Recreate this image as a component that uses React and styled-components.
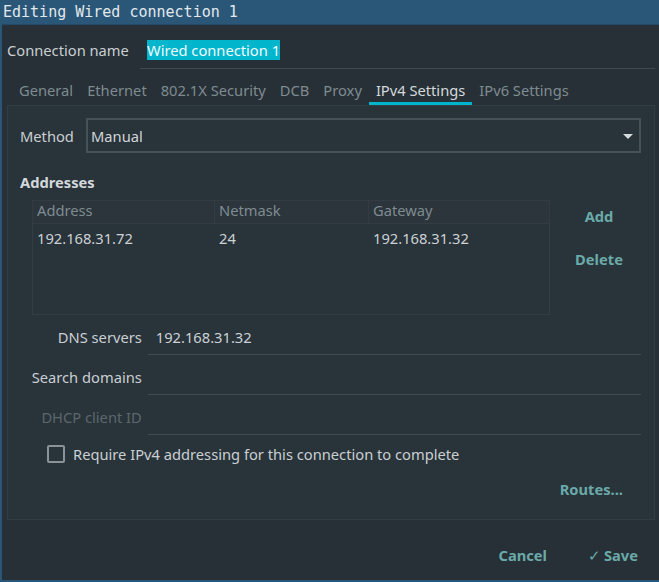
import React from "react";
import styled, { createGlobalStyle } from "styled-components";

const GlobalStyle = createGlobalStyle`
  html, body {
    margin: 0;
    padding: 0;
    background: #273036;
  }
  body {
    font-family: "Noto Sans", "Open Sans", sans-serif;
    font-size: 14.7px;
    color: #c9cfd2;
  }
`;

const tabs = [
  "General",
  "Ethernet",
  "802.1X Security",
  "DCB",
  "Proxy",
  "IPv4 Settings",
  "IPv6 Settings",
];

const App = () => {
  return (
    <>
      <GlobalStyle />
      <Window>
        <TitleBar>Editing Wired connection 1</TitleBar>
        <Body>
          <NameRow>
            <NameLabel>Connection name</NameLabel>
            <NameField>
              <Selected>Wired connection 1</Selected>
            </NameField>
          </NameRow>

          <TabBar>
            {tabs.map((t) => (
              <Tab key={t} $active={t === "IPv4 Settings"}>
                {t}
              </Tab>
            ))}
          </TabBar>

          <Panel>
            <MethodRow>
              <MethodLabel>Method</MethodLabel>
              <Combo>
                Manual
                <Arrow />
              </Combo>
            </MethodRow>

            <SectionTitle>Addresses</SectionTitle>

            <AddressArea>
              <Table>
                <HeaderRow>
                  <HeadCell $w={182}>Address</HeadCell>
                  <HeadCell $w={154}>Netmask</HeadCell>
                  <HeadCell>Gateway</HeadCell>
                </HeaderRow>
                <DataRow>
                  <Cell $w={182}>192.168.31.72</Cell>
                  <Cell $w={154}>24</Cell>
                  <Cell>192.168.31.32</Cell>
                </DataRow>
              </Table>
              <SideButtons>
                <FlatButton>Add</FlatButton>
                <FlatButton>Delete</FlatButton>
              </SideButtons>
            </AddressArea>

            <FieldRow>
              <FieldLabel>DNS servers</FieldLabel>
              <FieldInput>192.168.31.32</FieldInput>
            </FieldRow>
            <FieldRow>
              <FieldLabel>Search domains</FieldLabel>
              <FieldInput />
            </FieldRow>
            <FieldRow>
              <FieldLabel $disabled>DHCP client ID</FieldLabel>
              <FieldInput />
            </FieldRow>

            <CheckRow>
              <Checkbox />
              Require IPv4 addressing for this connection to complete
            </CheckRow>

            <RoutesRow>
              <FlatButton>Routes...</FlatButton>
            </RoutesRow>
          </Panel>

          <Footer>
            <FlatButton>Cancel</FlatButton>
            <FlatButton>
              <Check>✓</Check>Save
            </FlatButton>
          </Footer>
        </Body>
      </Window>
    </>
  );
};

const Window = styled.div`
  width: 659px;
  height: 582px;
  box-sizing: border-box;
  border-left: 2px solid #2a5778;
  border-bottom: 2px solid #2a5778;
  display: flex;
  flex-direction: column;
  overflow: hidden;
`;

const TitleBar = styled.div`
  height: 25px;
  flex: none;
  box-sizing: border-box;
  background: #2a5778;
  border-bottom: 1px solid #224a66;
  margin-left: -2px;
  padding-left: 3px;
  font-family: "DejaVu Sans Mono", monospace;
  font-size: 15px;
  line-height: 25px;
  color: #e2e8ec;
  white-space: nowrap;
`;

const Body = styled.div`
  flex: 1;
  display: flex;
  flex-direction: column;
  padding: 0 4px 0 5px;
`;

const NameRow = styled.div`
  height: 44px;
  flex: none;
  display: flex;
  align-items: center;
  padding-top: 5px;
  box-sizing: border-box;
`;

const NameLabel = styled.div`
  width: 133px;
`;

const NameField = styled.div`
  flex: 1;
  align-self: stretch;
  display: flex;
  align-items: center;
  padding-left: 7px;
  padding-top: 2px;
  border-bottom: 1px solid #3f4a50;
`;

const Selected = styled.span`
  background: #00b5cc;
  color: #f2fbfc;
  line-height: 20px;
`;

const TabBar = styled.div`
  display: flex;
  flex: none;
  height: 36px;
  padding-left: 4px;
  margin-left: 1px;
`;

const Tab = styled.div`
  padding: 8px 7px 0;
  display: flex;
  align-items: center;
  color: ${(p) => (p.$active ? "#d3d8db" : "#7f8b91")};
  border-bottom: 3px solid ${(p) => (p.$active ? "#00b4cc" : "transparent")};
  box-sizing: border-box;
`;

const Panel = styled.div`
  height: 415px;
  flex: none;
  box-sizing: border-box;
  border: 1px solid #323d43;
  background: #29333a;
  display: flex;
  flex-direction: column;
  padding: 12px 13px 0 12px;
`;

const MethodRow = styled.div`
  display: flex;
  align-items: center;
`;

const MethodLabel = styled.div`
  width: 66px;
`;

const Combo = styled.div`
  flex: 1;
  height: 35px;
  box-sizing: border-box;
  border: 2px solid #465257;
  display: flex;
  align-items: center;
  padding-left: 3px;
  position: relative;
  color: #d0d5d8;
`;

const Arrow = styled.span`
  position: absolute;
  right: 6px;
  top: 14px;
  width: 0;
  height: 0;
  border-left: 5px solid transparent;
  border-right: 5px solid transparent;
  border-top: 5px solid #d5dadc;
`;

const SectionTitle = styled.div`
  font-weight: bold;
  margin-top: 20px;
  height: 19px;
  line-height: 19px;
  color: #d3d8db;
`;

const AddressArea = styled.div`
  display: flex;
  margin-top: 8px;
  padding-left: 12px;
`;

const Table = styled.div`
  width: 518px;
  height: 115px;
  flex: none;
  box-sizing: border-box;
  border: 1px solid #323c42;
  background: #29333a;
`;

const HeaderRow = styled.div`
  display: flex;
  height: 22px;
  border-bottom: 1px solid #323c42;
  background: #2b353b;
`;

const HeadCell = styled.div`
  width: ${(p) => (p.$w ? `${p.$w}px` : "auto")};
  flex: ${(p) => (p.$w ? "none" : 1)};
  box-sizing: border-box;
  padding-left: 4px;
  color: #7f8b91;
  line-height: 19px;
  border-right: 1px solid #323c42;
  &:last-child {
    border-right: none;
  }
`;

const DataRow = styled.div`
  display: flex;
  height: 27px;
  align-items: center;
`;

const Cell = styled.div`
  width: ${(p) => (p.$w ? `${p.$w}px` : "auto")};
  flex: ${(p) => (p.$w ? "none" : 1)};
  box-sizing: border-box;
  padding-left: 4px;
  color: #ccd2d5;
`;

const SideButtons = styled.div`
  flex: 1;
  display: flex;
  flex-direction: column;
  align-items: center;
  gap: 25px;
  padding: 7px 0 0 7px;
`;

const FlatButton = styled.div`
  font-weight: bold;
  color: #6aaaa8;
  line-height: 18px;
  height: 18px;
  display: flex;
  align-items: center;
  white-space: nowrap;
`;

const FieldRow = styled.div`
  display: flex;
  height: 40px;
  flex: none;
  align-items: stretch;
`;

const FieldLabel = styled.div`
  width: 128px;
  box-sizing: border-box;
  padding: 0 6px 8px 0;
  line-height: 20px;
  display: flex;
  align-items: flex-end;
  justify-content: flex-end;
  color: ${(p) => (p.$disabled ? "#5c676d" : "#c9cfd2")};
`;

const FieldInput = styled.div`
  width: 494px;
  box-sizing: border-box;
  border-bottom: 1px solid #3f4a50;
  display: flex;
  align-items: flex-end;
  padding: 0 0 7px 8px;
  line-height: 20px;
  color: #ccd2d5;
`;

const CheckRow = styled.div`
  display: flex;
  align-items: center;
  height: 37px;
  flex: none;
  padding-left: 27px;
  gap: 8px;
`;

const Checkbox = styled.span`
  width: 18px;
  height: 18px;
  box-sizing: border-box;
  border: 2px solid #8b9397;
  border-radius: 2px;
`;

const RoutesRow = styled.div`
  display: flex;
  justify-content: flex-end;
  padding-right: 18px;
  margin-top: 8px;
`;

const Footer = styled.div`
  flex: 1;
  display: flex;
  justify-content: flex-end;
  align-items: center;
  gap: 41px;
  padding-right: 17px;
  padding-top: 10px;
`;

const Check = styled.span`
  font-weight: normal;
  margin-right: 3px;
`;

export default App;
